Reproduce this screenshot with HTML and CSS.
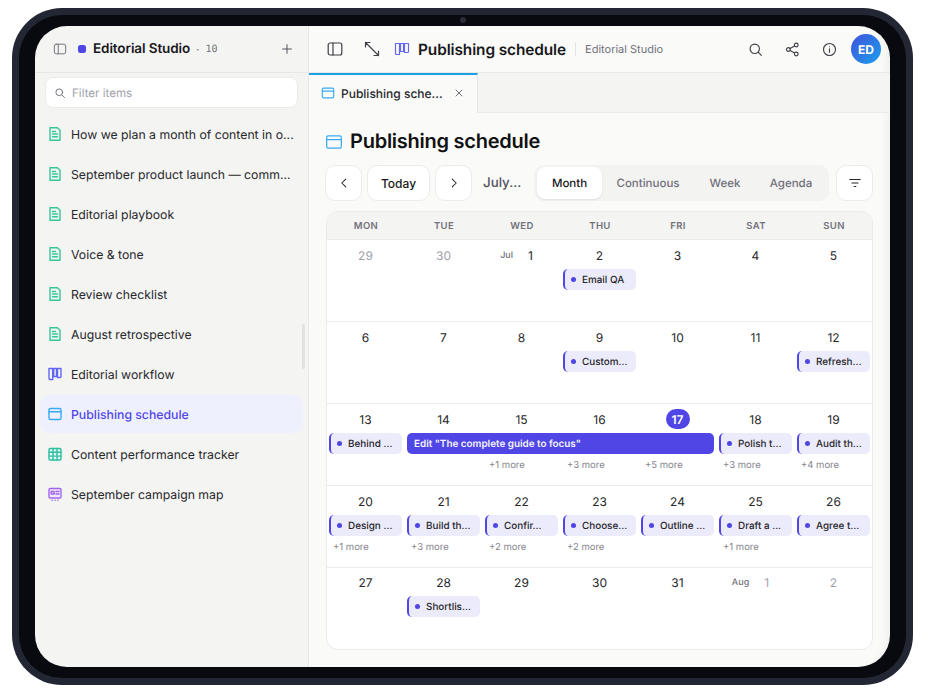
FILE: index.html
```html
<!DOCTYPE html>
<html lang="en">
<head>
<meta charset="utf-8">
<title>Publishing schedule</title>
<link rel="stylesheet" href="styles.css">
</head>
<body>
<div class="device">
  <span class="camera"></span>
  <div class="screen">
    <aside class="sidebar">
      <header class="side-head">
        <svg class="ic18 grey" viewBox="0 0 16 16"><rect x="1.5" y="2.5" width="13" height="11" rx="2"/><path d="M6 2.5v11"/></svg>
        <span class="ws-dot"></span>
        <span class="ws-name">Editorial Studio</span>
        <span class="ws-sep">·</span>
        <span class="ws-count">10</span>
        <svg class="plus" viewBox="0 0 16 16"><path d="M8 3v10M3 8h10"/></svg>
      </header>
      <div class="search">
        <svg class="search-ic" viewBox="0 0 16 16"><circle cx="7" cy="7" r="4.5"/><path d="M10.5 10.5 14 14"/></svg>
        <span>Filter items</span>
      </div>
      <nav class="items">
        <a class="item"><svg class="ic doc" viewBox="0 0 16 16"><path d="M3 1.7h7.500L13 4.200v10.100H3z"/><path d="M5.500 5.500h3M5.500 8h5M5.500 10.800h5"/></svg><span>How we plan a month of content in o...</span></a>
        <a class="item"><svg class="ic doc" viewBox="0 0 16 16"><path d="M3 1.7h7.500L13 4.200v10.100H3z"/><path d="M5.500 5.500h3M5.500 8h5M5.500 10.800h5"/></svg><span>September product launch — comm...</span></a>
        <a class="item"><svg class="ic doc" viewBox="0 0 16 16"><path d="M3 1.7h7.500L13 4.200v10.100H3z"/><path d="M5.500 5.500h3M5.500 8h5M5.500 10.800h5"/></svg><span>Editorial playbook</span></a>
        <a class="item"><svg class="ic doc" viewBox="0 0 16 16"><path d="M3 1.7h7.500L13 4.200v10.100H3z"/><path d="M5.500 5.500h3M5.500 8h5M5.500 10.800h5"/></svg><span>Voice &amp; tone</span></a>
        <a class="item"><svg class="ic doc" viewBox="0 0 16 16"><path d="M3 1.7h7.500L13 4.200v10.100H3z"/><path d="M5.500 5.500h3M5.500 8h5M5.500 10.800h5"/></svg><span>Review checklist</span></a>
        <a class="item"><svg class="ic doc" viewBox="0 0 16 16"><path d="M3 1.7h7.500L13 4.200v10.100H3z"/><path d="M5.500 5.500h3M5.500 8h5M5.500 10.800h5"/></svg><span>August retrospective</span></a>
        <a class="item"><svg class="ic board" viewBox="0 0 16 16"><path d="M2 2.500h3.700v11H3a1 1 0 0 1-1-1zM6.700 2.500h2.800v8H6.700zM10.500 2.500H14v8a1 1 0 0 1-1 1h-2.500z"/></svg><span>Editorial workflow</span></a>
        <a class="item active"><svg class="ic cal" viewBox="0 0 16 16"><rect x="2" y="2.500" width="12" height="11" rx="1.500"/><path d="M2 5.800h12"/></svg><span>Publishing schedule</span></a>
        <a class="item"><svg class="ic grid" viewBox="0 0 16 16"><rect x="2" y="2.500" width="12" height="11.500" rx="1.200"/><path d="M2 6.300h12M2 10.100h12M6 2.500v11.500M10 2.500v11.500"/></svg><span>Content performance tracker</span></a>
        <a class="item"><svg class="ic map" viewBox="0 0 16 16"><rect x="2" y="2.500" width="12" height="9.500" rx="1.200"/><path d="M4.200 5.500h3v2.500h-3zM9 5.500h3M9 8h3M5 14.200h.1M8 14.200h.1M11 14.200h.1"/></svg><span>September campaign map</span></a>
        <span class="scrollbar"></span>
      </nav>
    </aside>
    <main class="main">
      <header class="top">
        <svg class="ic18 dark" viewBox="0 0 16 16"><rect x="1.200" y="2" width="13.600" height="12" rx="2"/><path d="M6 2v12"/></svg>
        <svg class="ic18 dark expand" viewBox="0 0 16 16"><path d="M1.500 1.500 14.500 14.500M1.500 6V1.500H6M10 14.500h4.500V10"/></svg>
        <svg class="ic18 board crumb" viewBox="0 0 16 16"><path d="M1.500 2.500h4v11h-3a1 1 0 0 1-1-1zM6.500 2.500h3v8h-3zM10.500 2.500h4v8a1 1 0 0 1-1 1h-3z"/></svg>
        <span class="page-name">Publishing schedule</span>
        <span class="ws-link">Editorial Studio</span>
        <span class="top-right">
          <svg class="act" viewBox="0 0 16 16"><circle cx="7.200" cy="7.200" r="5"/><path d="M11 11l3.200 3.200"/></svg>
          <svg class="act" viewBox="0 0 16 16"><circle cx="12" cy="3.200" r="2"/><circle cx="3.600" cy="8" r="2"/><circle cx="12" cy="12.800" r="2"/><path d="M5.400 7 10.200 4.200M5.400 9 10.200 11.800"/></svg>
          <svg class="act" viewBox="0 0 16 16"><circle cx="8" cy="8" r="6.400"/><path d="M8 7.200v3.600M8 5h.01"/></svg>
          <span class="avatar">ED</span>
        </span>
      </header>
      <div class="tabs">
        <div class="tab">
          <svg class="ic cal tab-ic" viewBox="0 0 16 16"><rect x="1.500" y="2.500" width="13" height="11" rx="1.500"/><path d="M1.500 5.800h13"/></svg>
          <span class="tab-name">Publishing sche...</span>
          <svg class="tab-x" viewBox="0 0 10 10"><path d="M2 2l6 6M8 2l-6 6"/></svg>
        </div>
      </div>
      <section class="content">
        <h1 class="title"><svg class="title-ic cal" viewBox="0 0 16 16"><rect x="1.500" y="2.500" width="13" height="11" rx="1.500"/><path d="M1.500 5.800h13"/></svg>Publishing schedule</h1>
        <div class="toolbar">
          <button class="btn sq"><svg class="chev" viewBox="0 0 16 16"><path d="M10 3.500 5.500 8l4.500 4.500"/></svg></button>
          <button class="btn today">Today</button>
          <button class="btn sq"><svg class="chev" viewBox="0 0 16 16"><path d="M6 3.500 10.500 8 6 12.500"/></svg></button>
          <span class="month-label">July...</span>
          <div class="seg">
            <span class="seg-i on">Month</span>
            <span class="seg-i">Continuous</span>
            <span class="seg-i">Week</span>
            <span class="seg-i">Agenda</span>
          </div>
          <button class="btn sq filter"><svg class="chev" viewBox="0 0 16 16"><path d="M2 4h12M4.500 8h7M7 12h2"/></svg></button>
        </div>
        <div class="cal-box">
          <div class="dow"><span>MON</span><span>TUE</span><span>WED</span><span>THU</span><span>FRI</span><span>SAT</span><span>SUN</span></div>
          <div class="week">
            <div class="day"><span class="num muted">29</span></div>
            <div class="day"><span class="num muted">30</span></div>
            <div class="day"><span class="num split"><small>Jul</small>1</span></div>
            <div class="day"><span class="num">2</span><div class="ev">Email QA</div></div>
            <div class="day"><span class="num">3</span></div>
            <div class="day"><span class="num">4</span></div>
            <div class="day"><span class="num">5</span></div>
          </div>
          <div class="week">
            <div class="day"><span class="num">6</span></div>
            <div class="day"><span class="num">7</span></div>
            <div class="day"><span class="num">8</span></div>
            <div class="day"><span class="num">9</span><div class="ev">Custom...</div></div>
            <div class="day"><span class="num">10</span></div>
            <div class="day"><span class="num">11</span></div>
            <div class="day"><span class="num">12</span><div class="ev">Refresh...</div></div>
          </div>
          <div class="week">
            <div class="day"><span class="num">13</span><div class="ev">Behind ...</div></div>
            <div class="day"><span class="num">14</span><div class="ev-span">Edit "The complete guide to focus"</div></div>
            <div class="day"><span class="num">15</span><div class="ev-gap"></div><div class="more">+1 more</div></div>
            <div class="day"><span class="num">16</span><div class="ev-gap"></div><div class="more">+3 more</div></div>
            <div class="day"><span class="num today-num">17</span><div class="ev-gap"></div><div class="more">+5 more</div></div>
            <div class="day"><span class="num">18</span><div class="ev">Polish t...</div><div class="more">+3 more</div></div>
            <div class="day"><span class="num">19</span><div class="ev">Audit th...</div><div class="more">+4 more</div></div>
          </div>
          <div class="week">
            <div class="day"><span class="num">20</span><div class="ev">Design ...</div><div class="more">+1 more</div></div>
            <div class="day"><span class="num">21</span><div class="ev">Build th...</div><div class="more">+3 more</div></div>
            <div class="day"><span class="num">22</span><div class="ev">Confir...</div><div class="more">+2 more</div></div>
            <div class="day"><span class="num">23</span><div class="ev">Choose...</div><div class="more">+2 more</div></div>
            <div class="day"><span class="num">24</span><div class="ev">Outline ...</div></div>
            <div class="day"><span class="num">25</span><div class="ev">Draft a ...</div><div class="more">+1 more</div></div>
            <div class="day"><span class="num">26</span><div class="ev">Agree t...</div></div>
          </div>
          <div class="week last">
            <div class="day"><span class="num">27</span></div>
            <div class="day"><span class="num">28</span><div class="ev">Shortlis...</div></div>
            <div class="day"><span class="num">29</span></div>
            <div class="day"><span class="num">30</span></div>
            <div class="day"><span class="num">31</span></div>
            <div class="day"><span class="num split muted"><small>Aug</small>1</span></div>
            <div class="day"><span class="num muted">2</span></div>
          </div>
        </div>
      </section>
    </main>
  </div>
</div>
</body>
</html>
```

FILE: styles.css
```css
* { box-sizing: border-box; }
html, body { margin: 0; height: 100%; background: #fff; overflow: hidden; }
body { font-family: Inter, "Liberation Sans", sans-serif; color: #18181b; text-rendering: geometricPrecision; }
svg { fill: none; stroke: currentColor; stroke-linecap: round; stroke-linejoin: round; flex: none; display: block; }

.device { position: relative; width: 901px; height: 677px; margin: 8px 0 0 12px; padding: 7px; border-radius: 50px; background: #232733; }
.camera { position: absolute; z-index: 2; top: 9px; left: 448px; width: 6px; height: 6px; border-radius: 50%; background: #2a2d38; }
.screen { display: flex; width: 887px; height: 663px; padding: 11px 16px; border-radius: 43px; background: #090a10; }
.sidebar { width: 274px; height: 641px; flex: none; display: flex; flex-direction: column; background: #f4f4f3; border-right: 1px solid #e8e8e6; border-radius: 32px 0 0 32px; }
.main { width: 581px; height: 641px; flex: none; display: flex; flex-direction: column; background: #fafaf9; border-radius: 0 32px 32px 0; box-shadow: inset -14px 0 10px -12px rgba(0,0,0,.06); }

.side-head { height: 47px; flex: none; display: flex; align-items: center; padding: 0 14px 0 18px; border-bottom: 1px solid #e7e7e5; }
.ic18 { width: 14px; height: 14px; stroke-width: 1.1; }
.grey { color: #71717a; }
.ws-dot { width: 8px; height: 8px; margin-left: 11px; border-radius: 2.5px; background: #4f46e5; }
.ws-name { margin-left: 7px; font-size: 13.5px; font-weight: 600; letter-spacing: -.1px; color: #18181b; }
.ws-sep { margin-left: 6px; font-size: 12px; color: #71717a; }
.ws-count { margin-left: 6px; font-family: "DejaVu Sans Mono", monospace; font-size: 10px; color: #71717a; }
.plus { width: 14px; height: 14px; margin-left: auto; stroke-width: 1.1; color: #52525b; }

.search { height: 31px; margin: 4px 10px 0; flex: none; display: flex; align-items: center; gap: 6px; padding: 0 8px; background: #fff; border: 1px solid #ececea; border-radius: 8px; font-size: 11.6px; color: #a1a1aa; }
.search-ic { width: 12px; height: 12px; stroke-width: 1.3; color: #71717a; }

.items { position: relative; display: flex; flex-direction: column; padding: 6px 5px 0 5px; }
.item { height: 40px; flex: none; display: flex; align-items: center; gap: 8px; padding: 0 5px 0 7px; border-radius: 10px; font-size: 12.25px; color: #27272a; }
.item span { white-space: nowrap; }
.item.active { height: 38px; margin: 1px 0; background: #eff0fe; color: #4f46e5; font-weight: 500; }
.ic { width: 16px; height: 16px; stroke-width: 1.4; }
.doc { color: #34c79a; }
.board { color: #6366f1; }
.cal { color: #38aaf0; }
.grid { color: #2fbfa3; fill: #e0f5ef; }
.map { color: #a066f0; fill: #f0e8fd; }
.scrollbar { position: absolute; top: 216px; right: 3px; width: 3px; height: 45px; border-radius: 2px; background: #e2e2e0; }

.top { height: 47px; flex: none; display: flex; align-items: center; padding: 0 9px 0 18px; border-bottom: 1px solid #e9e9e7; }
.top .ic18 { width: 16px; height: 16px; stroke-width: 1.2; }
.dark { color: #3f3f46; }
.expand { margin-left: 21px; }
.top .crumb { margin-left: 14px; color: #6366f1; }
.page-name { margin-left: 8px; font-size: 15.4px; font-weight: 600; letter-spacing: -.1px; color: #18181b; }
.ws-link { margin-left: 9px; padding-left: 9px; border-left: 1px solid #e4e4e2; font-size: 11px; line-height: 14px; color: #71717a; }
.top-right { margin-left: auto; display: flex; align-items: center; }
.act { width: 15px; height: 15px; margin-right: 22px; stroke-width: 1.2; color: #3f3f46; }
.top-right .act:nth-child(3) { margin-right: 14px; }
.avatar { width: 30px; height: 30px; display: flex; align-items: center; justify-content: center; border-radius: 50%; background: linear-gradient(135deg, #3f51dc, #1ca0ec); color: #fff; font-size: 12px; font-weight: 700; }

.tabs { height: 40px; flex: none; background: #f4f4f3; border-bottom: 1px solid #ebebe9; }
.tab { width: 169px; height: 40px; display: flex; align-items: center; padding: 0 13px 2px 12px; background: #fafaf9; border-top: 2px solid #1ba1e2; border-right: 1px solid #e5e5e3; }
.tab-ic { width: 14px; height: 14px; stroke-width: 1.3; }
.tab-name { margin-left: 6px; font-size: 12px; font-weight: 500; white-space: nowrap; color: #27272a; }
.tab-x { width: 10px; height: 10px; margin-left: auto; stroke-width: 1; color: #71717a; }

.content { padding: 14px 17px 0; }
.title { display: flex; align-items: center; gap: 7px; height: 28px; margin: 0 0 0 -1px; font-size: 20px; font-weight: 600; letter-spacing: -.25px; color: #111113; }
.title-ic { width: 18px; height: 18px; margin-top: 2px; stroke-width: 1.1; }

.toolbar { display: flex; align-items: center; margin: 10px 0 0 -1px; }
.btn { height: 36px; flex: none; display: flex; align-items: center; justify-content: center; background: #fff; border: 1px solid #ececea; border-radius: 10px; font-family: inherit; font-size: 12px; font-weight: 500; color: #18181b; padding: 0; }
.btn.sq { width: 37px; }
.chev { width: 14px; height: 14px; stroke-width: 1.2; color: #27272a; }
.today { width: 63px; margin: 0 5px; }
.month-label { width: 54px; margin-left: 11px; flex: none; font-size: 13.3px; font-weight: 500; color: #52525b; white-space: nowrap; }
.seg { width: 295px; height: 36px; flex: none; display: flex; align-items: center; padding: 2px 3px; margin-left: -3px; background: #f3f3f2; border-radius: 10px; }
.seg-i { height: 32px; display: flex; align-items: center; justify-content: center; font-size: 11.5px; font-weight: 500; color: #71717a; }
.seg-i:nth-child(1) { width: 65px; }
.seg-i:nth-child(2) { width: 92px; }
.seg-i:nth-child(3) { width: 62px; }
.seg-i:nth-child(4) { width: 70px; }
.seg-i.on { background: #fff; border-radius: 8px; color: #18181b; box-shadow: 0 1px 2px rgba(0,0,0,.08); }
.filter { margin-left: 7px; }

.cal-box { width: 547px; margin-top: 10px; background: #fff; border: 1px solid #ebebe9; border-radius: 12px; overflow: hidden; }
.dow { height: 28px; padding-top: 2px; display: grid; grid-template-columns: repeat(7, 78px); align-items: center; background: #f4f4f3; border-bottom: 1px solid #ebebe9; font-size: 9.5px; font-weight: 600; letter-spacing: .4px; color: #71717a; text-align: center; }
.week { height: 82px; display: grid; grid-template-columns: repeat(7, 78px); border-bottom: 1px solid #ebebe9; }
.week.last { border-bottom: 0; height: 81px; }
.day { display: flex; flex-direction: column; align-items: stretch; padding: 5px 3px 0 2px; min-width: 0; }
.week.last .day { padding-top: 4px; }
.num { height: 20px; display: flex; align-items: center; justify-content: center; font-size: 12px; color: #27272a; }
.num.muted { color: #a1a1aa; }
.split { padding-right: 10px; }
.num small { margin-right: 15px; font-size: 9px; font-weight: 500; color: #71717a; }
.today-num { width: 24px; margin: 0 auto; border-radius: 10px; background: #4f46e5; color: #fff; font-weight: 600; }
.ev { position: relative; height: 21px; margin-top: 4px; display: flex; align-items: center; padding-left: 17px; background: #ecebfb; border-left: 2px solid #4f46e5; border-radius: 5px; font-size: 9.9px; font-weight: 500; color: #27272a; white-space: nowrap; overflow: hidden; }
.ev::before { content: ""; position: absolute; left: 6px; top: 8px; width: 5px; height: 5px; border-radius: 50%; background: #4f46e5; }
.ev-gap { height: 21px; margin-top: 4px; }
.ev-span { position: relative; z-index: 1; width: 307px; height: 21px; margin-top: 4px; display: flex; align-items: center; padding-left: 7px; background: #4f46e5; border-radius: 5px; font-size: 9.9px; font-weight: 600; color: #f4f4ff; white-space: nowrap; }
.more { margin-top: 6px; padding-left: 4px; font-size: 9.5px; color: #85858d; }
```
